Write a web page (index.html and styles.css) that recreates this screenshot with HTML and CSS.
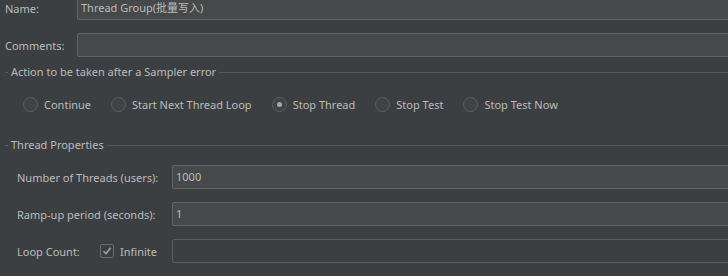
FILE: index.html
```html
<!DOCTYPE html>
<html>
  <head>
    <title>Thread Group</title>
    <link rel="stylesheet" href="styles.css">
  </head>
  <body>
    <div class="panel">

      <div class="field-row name-row">
        <label class="top-label">Name:</label>
        <div class="field">Thread Group(批量写入)</div>
      </div>

      <div class="field-row comments-row">
        <label class="top-label">Comments:</label>
        <div class="field"></div>
      </div>

      <div class="titled">
        <span class="dash"></span>
        <span class="title">Action to be taken after a Sampler error</span>
        <span class="rule"></span>
      </div>

      <div class="radio-row">
        <span class="radio"></span><span class="radio-text">Continue</span>
        <span class="radio"></span><span class="radio-text">Start Next Thread Loop</span>
        <span class="radio checked"></span><span class="radio-text">Stop Thread</span>
        <span class="radio"></span><span class="radio-text">Stop Test</span>
        <span class="radio"></span><span class="radio-text">Stop Test Now</span>
      </div>

      <div class="titled props-title">
        <span class="dash"></span>
        <span class="title">Thread Properties</span>
        <span class="rule"></span>
      </div>

      <div class="props">
        <div class="prop-row">
          <label class="prop-label">Number of Threads (users):</label>
          <div class="field">1000</div>
        </div>
        <div class="prop-row">
          <label class="prop-label">Ramp-up period (seconds):</label>
          <div class="field">1</div>
        </div>
        <div class="prop-row">
          <div class="prop-label loop">
            <span class="loop-text">Loop Count:</span>
            <span class="check">
              <svg width="10" height="10" viewBox="0 0 10 10">
                <path d="M1.5 5.2 L4 7.8 L8.6 1.8" fill="none" stroke="#a9a9a9" stroke-width="1.4"/>
              </svg>
            </span>
            <span>Infinite</span>
          </div>
          <div class="field disabled"></div>
        </div>
      </div>

    </div>
  </body>
</html>
```

FILE: styles.css
```css
body {
    margin: 0;
    padding: 0;
    background-color: #3c3f41;
    color: #bbbbbb;
    font-family: "Noto Sans", "Noto Sans CJK SC", sans-serif;
    font-size: 11px;
    overflow: hidden;
}

.panel {
    display: flex;
    flex-direction: column;
    margin-top: -4px;
    margin-right: -30px;
}

.field-row {
    display: flex;
    align-items: center;
    padding-left: 5px;
}

.comments-row {
    margin-top: 13px;
}

.top-label {
    width: 72px;
}

.field {
    flex: 1;
    box-sizing: border-box;
    height: 24px;
    line-height: 22px;
    border: 1px solid #646464;
    border-radius: 2px;
    background-color: #45494a;
    padding: 0 3px;
    white-space: nowrap;
}

.field.disabled {
    background-color: #3c3f41;
    border-color: #5a5d5e;
}

.titled {
    display: flex;
    align-items: center;
    height: 16px;
    margin-top: 7px;
    padding-left: 5px;
}

.dash {
    width: 3px;
    height: 1px;
    background-color: #5a5d5f;
    margin-right: 3px;
}

.title {
    line-height: 16px;
}

.rule {
    flex: 1;
    height: 1px;
    background-color: #55585a;
    margin-left: 3px;
}

.radio-row {
    display: flex;
    align-items: center;
    height: 24px;
    margin-top: 12px;
    padding-left: 23px;
}

.radio {
    box-sizing: border-box;
    width: 15px;
    height: 15px;
    border: 1px solid #5e6162;
    border-radius: 50%;
    background-color: #3f4344;
    margin-right: 6px;
    display: flex;
    align-items: center;
    justify-content: center;
}

.radio.checked::after {
    content: "";
    width: 5px;
    height: 5px;
    border-radius: 50%;
    background-color: #a7a9aa;
}

.radio-text {
    margin-right: 20px;
}

.props-title {
    margin-top: 21px;
}

.props {
    display: flex;
    flex-direction: column;
    gap: 13px;
    margin-top: 12px;
    padding-left: 17px;
}

.prop-row {
    display: flex;
    align-items: center;
}

.prop-label {
    width: 155px;
}

.loop {
    display: flex;
    align-items: center;
}

.loop-text {
    width: 83px;
}

.check {
    box-sizing: border-box;
    width: 14px;
    height: 14px;
    border: 1px solid #6b6b6b;
    border-radius: 2px;
    margin-right: 6px;
    display: flex;
    align-items: center;
    justify-content: center;
}
```
